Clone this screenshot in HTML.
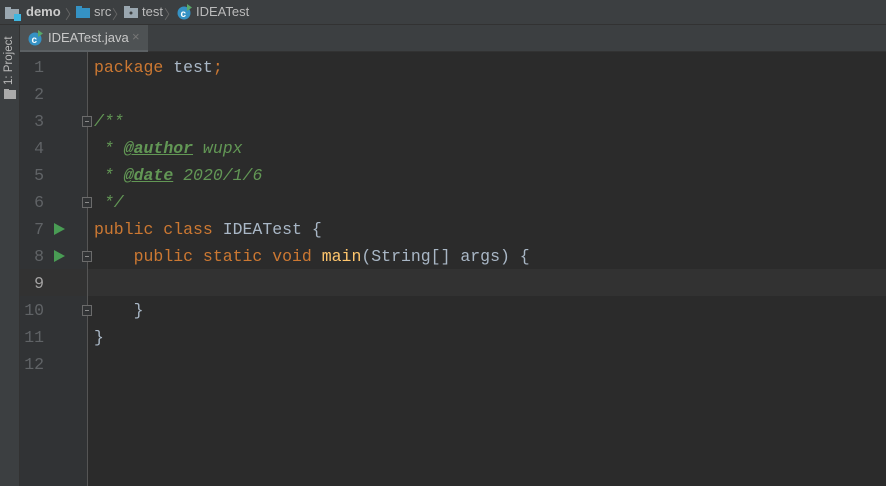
<!DOCTYPE html>
<html><head><style>
*{margin:0;padding:0;box-sizing:border-box}
body{width:886px;height:486px;background:#2b2b2b;overflow:hidden;position:relative;font-family:"Liberation Sans",sans-serif}
#crumb{position:absolute;left:0;top:0;width:886px;height:25px;background:#3c3f41;border-bottom:1px solid #323232;color:#bbbbbb;font-size:13px}
#crumb span{position:absolute;top:4px}
#strip{position:absolute;left:0;top:25px;width:20px;height:461px;background:#3c3f41;border-right:1px solid #323232}
#tabs{position:absolute;left:20px;top:25px;width:866px;height:27px;background:#3c3f41;border-bottom:1px solid #323232}
#tab{position:absolute;left:0;top:0;width:128px;height:27px;background:#4e5254;border-bottom:2px solid #5c6164;color:#c8c8c8;font-size:13px}
#gutter{position:absolute;left:20px;top:52px;width:68px;height:434px;background:#313335}
#code{position:absolute;left:88px;top:52px;right:0;bottom:0;background:#2b2b2b}
.ln{position:absolute;left:20px;width:24px;text-align:right;font:16.5px "Liberation Mono",monospace;color:#606366;line-height:27px}
.cl{position:absolute;left:94px;font:16.5px "Liberation Mono",monospace;color:#a9b7c6;line-height:27px;white-space:pre}
.k{color:#cc7832}.c{color:#629755;font-style:italic}.t{color:#629755;font-style:italic;font-weight:bold;text-decoration:underline}.f{color:#ffc66d}
.run{position:absolute;left:54px;width:0;height:0;border-left:11px solid #499c54;border-top:6.5px solid transparent;border-bottom:6.5px solid transparent}
.fold{position:absolute;left:82px;width:10px;height:11px;border:1px solid #6b6b6b;background:#313335}
.fold:after{content:"";position:absolute;left:2px;top:4px;width:4px;height:1px;background:#8a8a8a}
</style></head><body>
<div id="crumb">
<svg style="position:absolute;left:5px;top:5px" width="18" height="16"><rect x="0" y="2" width="6" height="3" fill="#9aa7b0"/><rect x="0" y="4" width="14" height="10" fill="#9aa7b0"/><rect x="9" y="9" width="7" height="7" fill="#40b6e0"/></svg>
<span style="left:26px;font-weight:bold;color:#ccc">demo</span><span style="left:65px;color:#666">〉</span>
<svg style="position:absolute;left:76px;top:6px" width="14" height="12"><rect x="0" y="0" width="6" height="3" fill="#3592c4"/><rect x="0" y="2" width="14" height="10" fill="#3592c4"/></svg>
<span style="left:94px">src</span><span style="left:112px;color:#666">〉</span>
<svg style="position:absolute;left:124px;top:6px" width="14" height="12"><rect x="0" y="0" width="6" height="3" fill="#9aa7b0"/><rect x="0" y="2" width="14" height="10" fill="#9aa7b0"/><circle cx="7" cy="7" r="1.5" fill="#3c3f41"/></svg>
<span style="left:142px">test</span><span style="left:164px;color:#666">〉</span>
<svg style="position:absolute;left:177px;top:4px" width="16" height="16"><circle cx="7" cy="9" r="6.5" fill="#3592c4"/><text x="3.5" y="13" font-size="10" font-weight="bold" fill="#fff" font-family="Liberation Sans">c</text><path d="M10 0v7l5-3.5z" fill="#59a869"/></svg>
<span style="left:196px">IDEATest</span>
</div>
<div id="strip">
<div style="position:absolute;transform:rotate(-90deg);transform-origin:0 0;width:60px;color:#bbb;font-size:11.5px;white-space:nowrap;top:60px;left:3px">1: Project</div>
<svg style="position:absolute;left:4px;top:64px" width="12" height="10"><rect x="0" y="0" width="5" height="2" fill="#aaa"/><rect x="0" y="1" width="12" height="9" fill="#aaa"/></svg>
</div>
<div id="tabs"><div id="tab">
<svg style="position:absolute;left:8px;top:5px" width="16" height="16"><circle cx="7" cy="9" r="6.5" fill="#3592c4"/><text x="3.5" y="13" font-size="10" font-weight="bold" fill="#fff" font-family="Liberation Sans">c</text><path d="M10 0v7l5-3.5z" fill="#59a869"/></svg>
<span style="position:absolute;left:28px;top:5px">IDEATest.java</span><span style="position:absolute;left:112px;top:4px;color:#777">×</span></div></div>
<div id="gutter"></div>
<div id="code"></div>
<div style="position:absolute;left:20px;top:269px;width:866px;height:27px;background:#323232"></div>
<div style="position:absolute;left:87px;top:52px;width:1px;height:434px;background:#555"></div>
<div class="ln" style="top:54px">1</div><div class="ln" style="top:81px">2</div><div class="ln" style="top:108px">3</div><div class="ln" style="top:135px">4</div><div class="ln" style="top:162px">5</div><div class="ln" style="top:189px">6</div><div class="ln" style="top:216px">7</div><div class="ln" style="top:243px">8</div><div class="ln" style="top:270px;color:#a4a3a3">9</div><div class="ln" style="top:297px">10</div><div class="ln" style="top:324px">11</div><div class="ln" style="top:351px">12</div>
<div class="run" style="top:223px"></div><div class="run" style="top:250px"></div>
<div class="fold" style="top:116px"></div><div class="fold" style="top:197px"></div><div class="fold" style="top:251px"></div><div class="fold" style="top:305px"></div>
<div class="cl" style="top:54px"><span class="k">package</span> test<span class="k">;</span></div>
<div class="cl" style="top:108px"><span class="c">/**</span></div>
<div class="cl" style="top:135px"><span class="c"> * </span><span class="t">@author</span><span class="c"> wupx</span></div>
<div class="cl" style="top:162px"><span class="c"> * </span><span class="t">@date</span><span class="c"> 2020/1/6</span></div>
<div class="cl" style="top:189px"><span class="c"> */</span></div>
<div class="cl" style="top:216px"><span class="k">public class</span> IDEATest {</div>
<div class="cl" style="top:243px">    <span class="k">public static void</span> <span class="f">main</span>(String[] args) {</div>
<div class="cl" style="top:297px">    }</div>
<div class="cl" style="top:324px">}</div>
</body></html>
